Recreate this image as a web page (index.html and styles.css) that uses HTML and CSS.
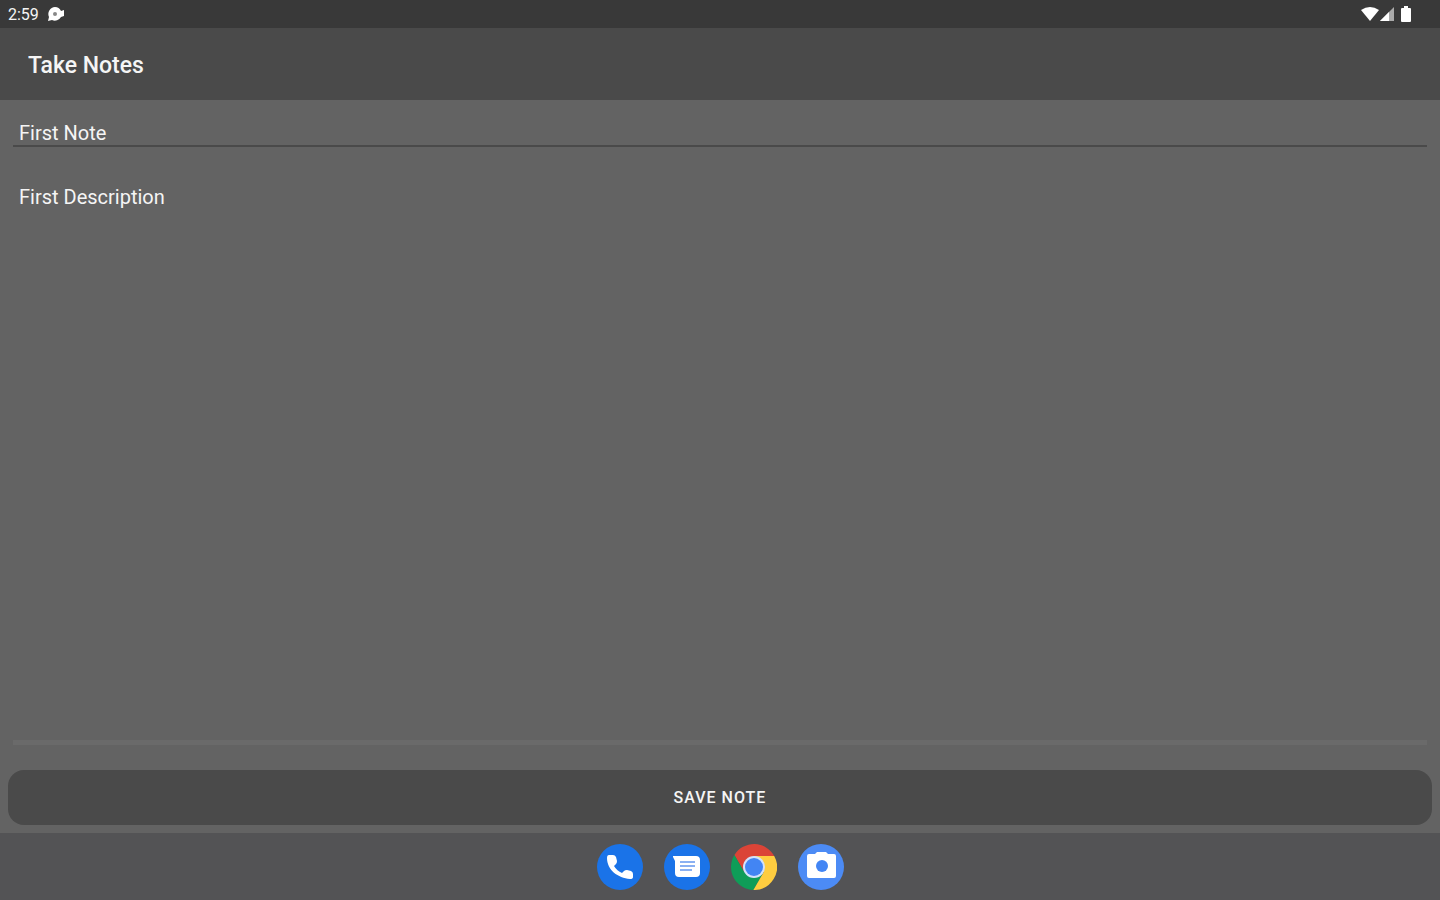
FILE: index.html
```html
<!DOCTYPE html>
<html lang="en">
<head>
    <meta charset="UTF-8">
    <meta name="viewport" content="width=device-width, initial-scale=1.0">
    <title>Take Notes</title>
    <link rel="stylesheet" href="styles.css">
</head>
<body>

    <!-- Status Bar -->
    <div class="status-bar">
        <div class="status-left">
            <span>2:59</span>
            <svg class="notice-icon" viewBox="0 0 18 16">
                <path d="M8 1a7 7 0 0 1 6 4l3-1v6l-3 1A7 7 0 0 1 5 14l-4 1 1-4A7 7 0 0 1 8 1z" fill="#fff"/>
                <circle cx="8" cy="8" r="2" fill="#888"/>
            </svg>
        </div>
        <div class="status-right">
            <svg width="18" height="16" viewBox="0 0 18 16">
                <path d="M0 4Q9-2 18 4L9 15z" fill="#fff"/>
            </svg>
            <svg width="16" height="16" viewBox="0 0 16 16">
                <path d="M1 15L15 1v14z" fill="#aaa"/>
                <path d="M1 15l9-9v9z" fill="#fff"/>
            </svg>
            <svg class="battery" width="12" height="18" viewBox="0 0 12 18">
                <path d="M4 1h4v2h2q1 0 1 1v12q0 1-1 1H2q-1 0-1-1V4q0-1 1-1h2z" fill="#fff"/>
            </svg>
        </div>
    </div>

    <!-- App Bar -->
    <header class="app-bar">
        <h1>Take Notes</h1>
    </header>

    <!-- Note Form -->
    <form class="note-form">
        <input class="note-title" type="text" value="First Note" aria-label="Title">
        <textarea class="note-text" aria-label="Description">First Description</textarea>
        <button class="save-button" type="button">SAVE NOTE</button>
    </form>

    <!-- Dock -->
    <nav class="dock">
        <button aria-label="Phone">
            <svg viewBox="0 0 46 46">
                <circle cx="23" cy="23" r="23" fill="#1a73e8"/>
                <path d="M12 11h4q2 0 3 2l1 4q0 2-1 3l-2 2q3 5 8 7l2-2q1-1 3-1l4 1q2 1 2 3v3q0 2-3 2C21 34 10 26 10 14q0-3 2-3z" fill="#fff"/>
            </svg>
        </button>
        <button aria-label="Messages">
            <svg viewBox="0 0 46 46">
                <circle cx="23" cy="23" r="23" fill="#1a73e8"/>
                <path d="M9 12h23q4 0 4 4v13q0 4-4 4H15q-4 0-4-4V17l-2-4z" fill="#fff"/>
                <path d="M16 18h15M16 22h15M16 26h12" stroke="#8ab0f2" stroke-width="2"/>
            </svg>
        </button>
        <button aria-label="Chrome">
            <svg viewBox="-23 -23 46 46">
                <path d="M-19.600-12A23 23 0 0 1 20.200-11H0L-9.500 5.500z" fill="#db4437"/>
                <path d="M-.600 23A23 23 0 0 1-19.600-12L-9.500 5.500H9.500z" fill="#0f9d58"/>
                <path d="M20.200-11A23 23 0 0 1-.600 23L9.500 5.500 0-11z" fill="#ffcd40"/>
                <circle r="11" fill="#d3e2fb"/>
                <circle r="9" fill="#4285f4"/>
            </svg>
        </button>
        <button aria-label="Camera">
            <svg viewBox="0 0 46 46">
                <circle cx="23" cy="23" r="23" fill="#4c8bf5"/>
                <path d="M11 10h6l2-2h9l2 2h6q2 0 2 2v20q0 2-2 2H11q-2 0-2-2V12q0-2 2-2z" fill="#fff"/>
                <circle cx="24" cy="22" r="6" fill="#4285f4"/>
            </svg>
        </button>
    </nav>

</body>
</html>
```
FILE: styles.css
```css
/* Reset and basic styles */
* {
    box-sizing: border-box;
}

body {
    margin: 0;
    min-height: 100vh;
    display: flex;
    flex-direction: column;
    background: #636363;
    color: #f5f5f5;
    font-family: Roboto, sans-serif;
}

svg {
    display: block;
}

/* Status Bar */
.status-bar {
    display: flex;
    justify-content: space-between;
    align-items: center;
    height: 28px;
    padding: 0 28px 0 8px;
    background: #393939;
    font-size: 16px;
}

.status-left {
    display: flex;
    align-items: center;
    gap: 8px;
}

.notice-icon {
    width: 18px;
    height: 16px;
}

.status-right {
    display: flex;
    align-items: center;
}

.battery {
    margin-left: 5px;
}

/* App Bar */
.app-bar {
    display: flex;
    align-items: center;
    height: 72px;
    padding: 2px 28px 0;
    background: #4a4a4a;
}

.app-bar h1 {
    margin: 0;
    font-size: 23px;
    font-weight: 500;
}

/* Note Form */
.note-form {
    flex: 1;
    display: flex;
    flex-direction: column;
    padding: 21px 8px 8px;
}

.note-title,
.note-text {
    margin: 0 5px;
    padding: 0 6px;
    border: none;
    outline: none;
    background: none;
    color: inherit;
    font-family: inherit;
    font-size: 20px;
    line-height: 24px;
}

.note-title {
    height: 26px;
    border-bottom: 2px solid #4a4a4a;
}

.note-text {
    flex: 1;
    margin-top: 38px;
    border-bottom: 5px solid #6a6a6a;
    resize: none;
}

/* Save Button */
.save-button {
    height: 55px;
    margin-top: 25px;
    border: none;
    border-radius: 16px;
    background: #4a4a4a;
    color: inherit;
    font-family: inherit;
    font-size: 16px;
    font-weight: 500;
    letter-spacing: 1px;
    cursor: pointer;
}

/* Dock */
.dock {
    display: flex;
    justify-content: center;
    align-items: center;
    gap: 21px;
    height: 67px;
    background: #535355;
}

.dock button {
    width: 46px;
    height: 46px;
    padding: 0;
    border: none;
    border-radius: 50%;
    background: none;
    cursor: pointer;
}
```
